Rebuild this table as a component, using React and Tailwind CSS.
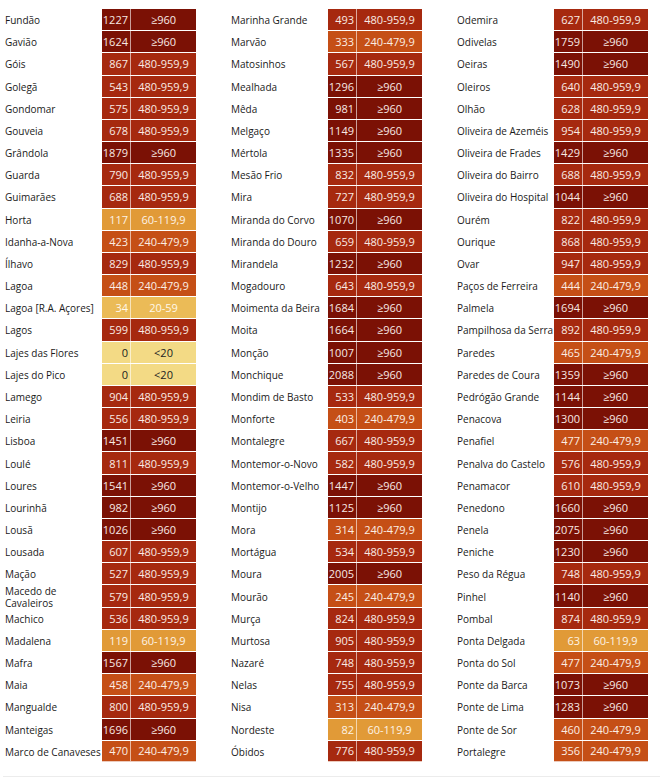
import React from "react";

const C1 = [
  ["Fundão", 1227, "≥960"],
  ["Gavião", 1624, "≥960"],
  ["Góis", 867, "480-959,9"],
  ["Golegã", 543, "480-959,9"],
  ["Gondomar", 575, "480-959,9"],
  ["Gouveia", 678, "480-959,9"],
  ["Grândola", 1879, "≥960"],
  ["Guarda", 790, "480-959,9"],
  ["Guimarães", 688, "480-959,9"],
  ["Horta", 117, "60-119,9"],
  ["Idanha-a-Nova", 423, "240-479,9"],
  ["Ílhavo", 829, "480-959,9"],
  ["Lagoa", 448, "240-479,9"],
  ["Lagoa [R.A. Açores]", 34, "20-59"],
  ["Lagos", 599, "480-959,9"],
  ["Lajes das Flores", 0, "<20"],
  ["Lajes do Pico", 0, "<20"],
  ["Lamego", 904, "480-959,9"],
  ["Leiria", 556, "480-959,9"],
  ["Lisboa", 1451, "≥960"],
  ["Loulé", 811, "480-959,9"],
  ["Loures", 1541, "≥960"],
  ["Lourinhã", 982, "≥960"],
  ["Lousã", 1026, "≥960"],
  ["Lousada", 607, "480-959,9"],
  ["Mação", 527, "480-959,9"],
  ["Macedo de|Cavaleiros", 579, "480-959,9"],
  ["Machico", 536, "480-959,9"],
  ["Madalena", 119, "60-119,9"],
  ["Mafra", 1567, "≥960"],
  ["Maia", 458, "240-479,9"],
  ["Mangualde", 800, "480-959,9"],
  ["Manteigas", 1696, "≥960"],
  ["Marco de Canaveses", 470, "240-479,9"],
];

const C2 = [
  ["Marinha Grande", 493, "480-959,9"],
  ["Marvão", 333, "240-479,9"],
  ["Matosinhos", 567, "480-959,9"],
  ["Mealhada", 1296, "≥960"],
  ["Mêda", 981, "≥960"],
  ["Melgaço", 1149, "≥960"],
  ["Mértola", 1335, "≥960"],
  ["Mesão Frio", 832, "480-959,9"],
  ["Mira", 727, "480-959,9"],
  ["Miranda do Corvo", 1070, "≥960"],
  ["Miranda do Douro", 659, "480-959,9"],
  ["Mirandela", 1232, "≥960"],
  ["Mogadouro", 643, "480-959,9"],
  ["Moimenta da Beira", 1684, "≥960"],
  ["Moita", 1664, "≥960"],
  ["Monção", 1007, "≥960"],
  ["Monchique", 2088, "≥960"],
  ["Mondim de Basto", 533, "480-959,9"],
  ["Monforte", 403, "240-479,9"],
  ["Montalegre", 667, "480-959,9"],
  ["Montemor-o-Novo", 582, "480-959,9"],
  ["Montemor-o-Velho", 1447, "≥960"],
  ["Montijo", 1125, "≥960"],
  ["Mora", 314, "240-479,9"],
  ["Mortágua", 534, "480-959,9"],
  ["Moura", 2005, "≥960"],
  ["Mourão", 245, "240-479,9"],
  ["Murça", 824, "480-959,9"],
  ["Murtosa", 905, "480-959,9"],
  ["Nazaré", 748, "480-959,9"],
  ["Nelas", 755, "480-959,9"],
  ["Nisa", 313, "240-479,9"],
  ["Nordeste", 82, "60-119,9"],
  ["Óbidos", 776, "480-959,9"],
];

const C3 = [
  ["Odemira", 627, "480-959,9"],
  ["Odivelas", 1759, "≥960"],
  ["Oeiras", 1490, "≥960"],
  ["Oleiros", 640, "480-959,9"],
  ["Olhão", 628, "480-959,9"],
  ["Oliveira de Azeméis", 954, "480-959,9"],
  ["Oliveira de Frades", 1429, "≥960"],
  ["Oliveira do Bairro", 688, "480-959,9"],
  ["Oliveira do Hospital", 1044, "≥960"],
  ["Ourém", 822, "480-959,9"],
  ["Ourique", 868, "480-959,9"],
  ["Ovar", 947, "480-959,9"],
  ["Paços de Ferreira", 444, "240-479,9"],
  ["Palmela", 1694, "≥960"],
  ["Pampilhosa da Serra", 892, "480-959,9"],
  ["Paredes", 465, "240-479,9"],
  ["Paredes de Coura", 1359, "≥960"],
  ["Pedrógão Grande", 1144, "≥960"],
  ["Penacova", 1300, "≥960"],
  ["Penafiel", 477, "240-479,9"],
  ["Penalva do Castelo", 576, "480-959,9"],
  ["Penamacor", 610, "480-959,9"],
  ["Penedono", 1660, "≥960"],
  ["Penela", 2075, "≥960"],
  ["Peniche", 1230, "≥960"],
  ["Peso da Régua", 748, "480-959,9"],
  ["Pinhel", 1140, "≥960"],
  ["Pombal", 874, "480-959,9"],
  ["Ponta Delgada", 63, "60-119,9"],
  ["Ponta do Sol", 477, "240-479,9"],
  ["Ponte da Barca", 1073, "≥960"],
  ["Ponte de Lima", 1283, "≥960"],
  ["Ponte de Sor", 460, "240-479,9"],
  ["Portalegre", 356, "240-479,9"],
];

const STYLE = {
  "≥960": "bg-[#7b1105] text-[#f7e9e4]",
  "480-959,9": "bg-[#a6290f] text-[#f9ebe4]",
  "240-479,9": "bg-[#c54f16] text-[#fbeee4]",
  "60-119,9": "bg-[#e19a37] text-[#fdf3e6]",
  "20-59": "bg-[#ebbb57] text-[#fff8ea]",
  "<20": "bg-[#f3da85] text-[#222222]",
};

function Row({ r, last }) {
  const [name, n, range] = r;
  const cls = STYLE[range];
  const parts = name.split("|");
  return (
    <div className="flex h-[22.18px]">
      <div className="w-[102px] pl-[5px] pt-[2px] flex items-center text-[#1a1a1a] text-[10px] leading-[12px]">
        {parts.length > 1 ? (
          <span className="leading-[12px]">
            {parts[0]}
            <br />
            {parts[1]}
          </span>
        ) : (
          <span className="whitespace-nowrap">{name}</span>
        )}
      </div>
      <div
        className={`flex ${cls} text-[11px] leading-[14px] border-t border-white ${
          last ? "border-b border-b-[#eccbbd]" : ""
        }`}
      >
        <div className="w-[29px] pt-[1px] flex items-center justify-end pr-[2px] border-r border-white/60">
          {n}
        </div>
        <div className="w-[65px] pt-[1px] flex items-center justify-center">{range}</div>
      </div>
    </div>
  );
}

function Group({ rows, className }) {
  return (
    <div className={`flex flex-col ${className}`}>
      {rows.map((r, i) => (
        <Row key={i} r={r} last={i === rows.length - 1} />
      ))}
    </div>
  );
}

export default function App() {
  return (
    <div
      className="w-[660px] h-[779px] bg-white overflow-hidden"
      style={{ fontFamily: '"Open Sans", "Noto Sans", sans-serif' }}
    >
      <div className="flex pt-[8px]">
        <Group rows={C1} className="w-[226px]" />
        <Group rows={C2} className="w-[226px]" />
        <Group rows={C3} className="w-[208px]" />
      </div>
      <div className="mt-[14px] ml-[3px] h-px bg-[#ececec]" />
    </div>
  );
}
